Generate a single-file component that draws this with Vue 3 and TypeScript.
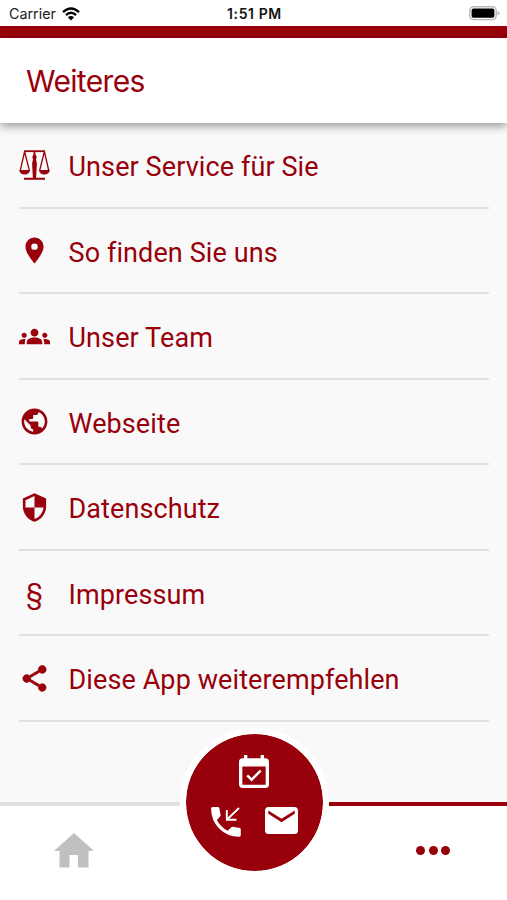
<script setup lang="ts">
interface MenuItem {
  label: string
  icon: string
}

const items: MenuItem[] = [
  { label: 'Unser Service für Sie', icon: 'scales' },
  { label: 'So finden Sie uns', icon: 'place' },
  { label: 'Unser Team', icon: 'groups' },
  { label: 'Webseite', icon: 'public' },
  { label: 'Datenschutz', icon: 'shield' },
  { label: 'Impressum', icon: 'section' },
  { label: 'Diese App weiterempfehlen', icon: 'share' },
]

const paths: Record<string, string> = {
  place: 'M12 2C8.13 2 5 5.13 5 9c0 5.25 7 13 7 13s7-7.75 7-13c0-3.87-3.13-7-7-7zm0 9.5a2.5 2.5 0 1 1 0-5 2.5 2.5 0 0 1 0 5z',
  groups:
    'M12 12.75c1.63 0 3.07.39 4.24.9 1.08.48 1.76 1.56 1.76 2.73V18H6v-1.61c0-1.18.68-2.26 1.76-2.73 1.17-.52 2.61-.91 4.24-.91zM4 13c1.1 0 2-.9 2-2s-.9-2-2-2-2 .9-2 2 .9 2 2 2zm1.13 1.1c-.37-.06-.74-.1-1.13-.1-.99 0-1.93.21-2.78.58C.48 14.9 0 15.62 0 16.43V18h4.5v-1.61c0-.83.23-1.61.63-2.29zM20 13c1.1 0 2-.9 2-2s-.9-2-2-2-2 .9-2 2 .9 2 2 2zm4 3.43c0-.81-.48-1.53-1.22-1.85-.85-.37-1.79-.58-2.78-.58-.39 0-.76.04-1.13.1.4.68.63 1.46.63 2.29V18H24v-1.57zM12 6c1.66 0 3 1.34 3 3s-1.34 3-3 3-3-1.34-3-3 1.34-3 3-3z',
  public:
    'M12 2C6.48 2 2 6.48 2 12s4.48 10 10 10 10-4.48 10-10S17.52 2 12 2zm-1 17.93c-3.95-.49-7-3.85-7-7.93 0-.62.08-1.21.21-1.79L9 15v1c0 1.1.9 2 2 2v1.93zm6.9-2.54c-.26-.81-1-1.39-1.9-1.39h-1v-3c0-.55-.45-1-1-1H8v-2h2c.55 0 1-.45 1-1V7h2c1.1 0 2-.9 2-2v-.41c2.93 1.19 5 4.06 5 7.41 0 2.08-.8 3.97-2.1 5.39z',
  shield:
    'M12 1L3 5v6c0 5.55 3.84 10.74 9 12 5.16-1.26 9-6.45 9-12V5l-9-4zm0 10.99h7c-.53 4.12-3.28 7.79-7 8.94V12H5V6.3l7-3.11v8.8z',
  share:
    'M18 16.08c-.76 0-1.44.3-1.96.77L8.91 12.7c.05-.23.09-.46.09-.7s-.04-.47-.09-.7l7.05-4.11c.54.5 1.25.81 2.04.81 1.66 0 3-1.34 3-3s-1.34-3-3-3-3 1.34-3 3c0 .24.04.47.09.7L8.04 9.81C7.5 9.31 6.79 9 6 9c-1.66 0-3 1.34-3 3s1.34 3 3 3c.79 0 1.5-.31 2.04-.81l7.12 4.16c-.05.21-.08.43-.08.65 0 1.61 1.31 2.92 2.92 2.92s2.92-1.31 2.92-2.92-1.31-2.92-2.92-2.92z',
}
</script>

<template>
  <div class="screen">
    <div class="status">
      <div class="carrier">
        <span>Carrier</span>
        <svg class="wifi" viewBox="0 0 18 14">
          <path d="M1 5.2Q9-2.2 17 5.2M3.9 8.1Q9 3.5 14.1 8.1" fill="none" stroke="#000" stroke-width="2.3" />
          <path d="M5.9 10.2Q9 7.6 12.1 10.2L9 13.5z" fill="#000" />
        </svg>
      </div>
      <div class="time">1:51 PM</div>
      <div class="power">
        <svg class="battery" viewBox="0 0 31 15">
          <rect x=".8" y=".8" width="26.4" height="12.8" rx="3.8" fill="#fff" stroke="#b9b9b9" stroke-width="1.4" />
          <rect x="2.6" y="2.6" width="22.8" height="9.2" rx="1.8" fill="#000" />
          <path d="M28.6 5q1.8.7 1.8 2.2t-1.8 2.2z" fill="#b0b0b0" />
        </svg>
      </div>
    </div>
    <div class="stripe"></div>
    <header class="header"><h1>Weiteres</h1></header>

    <ul class="list">
      <li v-for="item in items" :key="item.icon" class="row">
        <span class="icon">
          <svg v-if="item.icon === 'scales'" class="scales" viewBox="0 0 31 31">
            <g fill="none" stroke="currentColor" stroke-width="1.3">
              <path d="M5 1.2h21" stroke-width="1.8" />
              <path d="M5.6 1.5L1.4 20M5.6 1.5L10.2 20M25.4 1.5L20.8 20M25.4 1.5L29.6 20" />
            </g>
            <path
              d="M0 20h11.2q-1.2 4.6-5.6 4.6T0 20zM19.8 20H31q-1.2 4.6-5.6 4.6T19.8 20zM14.6 1h1.8v3l1.3 3-.7 2.2.9 4.4-.8 14.4h-3.2l-.8-14.4.9-4.400-.7-2.200 1.300-3zM5 27.700h21v2H5z"
              fill="currentColor"
            />
          </svg>
          <span v-else-if="item.icon === 'section'" class="section">§</span>
          <svg v-else class="glyph" :class="item.icon" viewBox="0 0 24 24">
            <path :d="paths[item.icon]" fill="currentColor" />
          </svg>
        </span>
        <span class="label">{{ item.label }}</span>
      </li>
    </ul>

    <nav class="tabs">
      <div class="tab home">
        <svg viewBox="0 0 40 35" class="house">
          <path d="M20 0L0 18h5.500v16.500h10V22h8.500v12.500h10.500V18H40z" fill="#c0c0c0" />
        </svg>
      </div>
      <div class="tab more"><i></i><i></i><i></i></div>
      <div class="fab">
        <svg class="calendar" viewBox="3 1 18 20" preserveAspectRatio="none">
          <path
            d="M16.53 11.06L15.47 10l-4.88 4.88-2.12-2.12-1.06 1.06L10.59 17l5.94-5.94zM19 3h-1V1h-2v2H8V1H6v2H5c-1.11 0-1.99.9-1.99 2L3 19c0 1.1.89 2 2 2h14c1.1 0 2-.9 2-2V5c0-1.1-.9-2-2-2zm0 16H5V8h14v11z"
            fill="#fff"
          />
        </svg>
        <div class="contact">
          <svg class="phone" viewBox="0 0 30 30">
            <path
              d="M1.7 0h5.2q1.6 0 1.7 1.7.1 3 1 5.9.4 1.1-.5 2l-3.2 3.4q3.5 7 10.8 10.8l3.6-3.5q.9-.8 2-.5 2.8.9 5.9 1 1.6.1 1.6 1.7v5.6q0 1.7-1.7 1.7Q16 29.6 8.1 21.5T0 1.7Q0 0 1.7 0z"
              fill="#fff"
            />
            <path d="M28 1L16 12.5M15.8 3v9.7h9.7" fill="none" stroke="#fff" stroke-width="1.9" />
          </svg>
          <svg class="mail" viewBox="2 4 20 16" preserveAspectRatio="none">
            <path
              d="M20 4H4c-1.1 0-1.99.9-1.99 2L2 18c0 1.1.9 2 2 2h16c1.1 0 2-.9 2-2V6c0-1.1-.9-2-2-2zm0 4l-8 5-8-5V6l8 5 8-5v2z"
              fill="#fff"
            />
          </svg>
        </div>
      </div>
    </nav>
  </div>
</template>

<style>
body {
  margin: 0;
  background: #f9f9f9;
}
</style>

<style scoped>
.screen {
  display: flex;
  flex-direction: column;
  width: 507px;
  height: 900px;
  overflow: hidden;
  background: #f9f9f9;
  color: #98000b;
  font-family: Roboto, sans-serif;
}
.status {
  display: grid;
  grid-template-columns: 1fr 1fr 1fr;
  align-items: center;
  box-sizing: border-box;
  height: 25.5px;
  padding: 2px 7px 0 9px;
  background: #fff;
  color: #222;
  font: 14.3px Inter, sans-serif;
}
.carrier {
  display: flex;
  align-items: center;
  gap: 6px;
}
.wifi {
  width: 18px;
  height: 14px;
}
.time {
  color: #111;
  font-size: 14px;
  font-weight: 600;
  letter-spacing: 0.6px;
  text-align: center;
}
.power {
  display: flex;
  justify-content: flex-end;
}
.battery {
  width: 31px;
  height: 15px;
}
.stripe {
  flex: none;
  height: 12px;
  background: #98000b;
}
.header {
  display: flex;
  align-items: center;
  flex: none;
  box-sizing: border-box;
  height: 85.5px;
  padding: 2px 25px 0 26px;
  background: #fff;
  box-shadow: 0 3px 9px rgba(0, 0, 0, 0.4);
}
h1 {
  margin: 0;
  font: 400 30px Inter, sans-serif;
  letter-spacing: -0.65px;
}
.list {
  flex: none;
  margin: 0;
  padding: 0 18px 0 19px;
  list-style: none;
}
.row {
  display: flex;
  align-items: center;
  box-sizing: border-box;
  height: 85.5px;
  border-bottom: 2px solid #e0e0e0;
}
.icon {
  display: flex;
  justify-content: center;
  width: 31px;
  padding-top: 1px;
  margin-right: 18.5px;
}
.glyph,
.scales {
  flex: none;
  width: 31px;
  height: 31px;
}
.scales {
  padding-top: 1px;
}
.share {
  stroke: currentColor;
  stroke-width: 0.6px;
}
.section {
  padding-top: 3px;
  font-size: 27px;
  line-height: 31px;
}
.label {
  padding-top: 5px;
  font-size: 27px;
  letter-spacing: 0.1px;
  line-height: 32px;
}
.tabs {
  position: relative;
  display: flex;
  justify-content: space-between;
  height: 98px;
  margin-top: auto;
  background: #fff;
}
.tab {
  display: flex;
  align-items: center;
  justify-content: center;
  box-sizing: border-box;
  width: 180px;
  padding-bottom: 5px;
  border-top: 4px solid #e0e0e0;
}
.home {
  padding-right: 32px;
}
.more {
  gap: 3.5px;
  padding-left: 32px;
  border-color: #98000b;
}
.more i {
  width: 9px;
  height: 9px;
  border-radius: 50%;
  background: #98000b;
}
.house {
  width: 40px;
  height: 35px;
}
.fab {
  position: absolute;
  left: 179.5px;
  top: -74.5px;
  display: flex;
  flex-direction: column;
  align-items: center;
  box-sizing: border-box;
  width: 149px;
  height: 149px;
  padding-top: 21px;
  border: 6px solid #fff;
  border-radius: 50%;
  background: #98000b;
  background-clip: padding-box;
}
.calendar {
  width: 30px;
  height: 33px;
}
.contact {
  display: flex;
  gap: 24px;
  margin-top: 19px;
}
.phone {
  width: 30px;
  height: 30px;
}
.mail {
  width: 33px;
  height: 27px;
}
</style>
